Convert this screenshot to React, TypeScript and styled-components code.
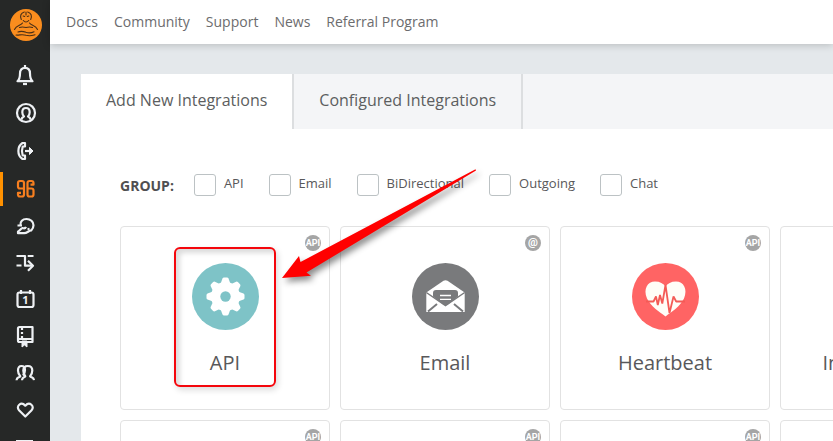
import React from "react";
import styled, { createGlobalStyle } from "styled-components";

const GlobalStyle = createGlobalStyle`
  *, *::before, *::after { box-sizing: border-box; }
  body {
    margin: 0;
    background: #e4e8eb;
    color: #58585a;
    font-family: "Open Sans", "Noto Sans", sans-serif;
  }
`;

const Page = styled.div`
  display: flex;
  height: 100vh;
  overflow: hidden;
`;

const Sidebar = styled.nav`
  display: flex;
  flex-direction: column;
  flex: none;
  gap: 3px;
  width: 50px;
  background: #262827;
`;

const Brand = styled.a`
  display: block;
  height: 32px;
  margin: 9px 0 14px 10px;
`;

const SideGroup = styled.div<{ $gap: number }>`
  display: flex;
  flex-direction: column;
  gap: ${(p) => p.$gap}px;
`;

const SideLink = styled.a<{ $active?: boolean }>`
  display: flex;
  align-items: center;
  height: 34px;
  padding-left: 10px;
  border-left: 3px solid ${(p) => (p.$active ? "#ff9100" : "transparent")};
  color: ${(p) => (p.$active ? "#f77f1f" : "#eef1f4")};
`;

const Glyph = styled.svg`
  display: block;
  flex: none;
  fill: none;
  stroke: currentColor;
  stroke-width: 2.2;
  stroke-linejoin: round;
`;

const Main = styled.div`
  display: flex;
  flex-direction: column;
  flex: 1;
  min-width: 0;
`;

const TopBar = styled.header`
  display: flex;
  align-items: center;
  flex: none;
  gap: 16px;
  height: 44px;
  padding: 0 16px;
  background: #fff;
  box-shadow: 0 1px 8px rgba(0, 0, 0, 0.2);
`;

const TopLink = styled.a`
  color: #6c6c6e;
  font-size: 14px;
  line-height: 20px;
  text-decoration: none;
  white-space: nowrap;
`;

const Panel = styled.main`
  flex: 1;
  margin: 30px 0 0 31px;
  background: #fff;
  overflow: hidden;
`;

const Tabs = styled.div`
  display: flex;
  height: 55px;
  background: #f4f5f7;
`;

const Tab = styled.button<{ $active?: boolean }>`
  padding: 0 25px 3px;
  border: 0;
  border-right: 2px solid #dcdee0;
  background: ${(p) => (p.$active ? "#fff" : "#f4f5f7")};
  color: #5c5e60;
  font: 16px/22px "Open Sans", "Noto Sans", sans-serif;
  white-space: nowrap;
`;

const Filters = styled.fieldset`
  display: flex;
  align-items: center;
  gap: 25px;
  margin: 44px 0 30px 39px;
  padding: 0;
  border: 0;
`;

const FilterTitle = styled.span`
  margin-right: -5px;
  padding-top: 3px;
  color: #4f4f51;
  font-size: 14px;
  font-weight: 700;
  line-height: 20px;
`;

const Filter = styled.label`
  display: flex;
  align-items: flex-start;
  gap: 8px;
  font-size: 13px;
  line-height: 20px;
  white-space: nowrap;
`;

const Check = styled.input`
  appearance: none;
  width: 22px;
  height: 22px;
  margin: 1px 0 0;
  border: 1px solid #bcc2c4;
  border-radius: 3px;
  background: #fff;
`;

const Cards = styled.div`
  display: grid;
  grid-template-columns: repeat(4, 210px);
  grid-auto-rows: 184px;
  gap: 10px;
  margin-left: 39px;
`;

const Card = styled.article`
  position: relative;
  display: flex;
  flex-direction: column;
  align-items: center;
  gap: 18px;
  padding-top: 36px;
  border: 1px solid #e2e2e2;
  border-radius: 4px;
`;

const CardTitle = styled.h2`
  margin: 0;
  color: #58585a;
  font-size: 20px;
  font-weight: 400;
  line-height: 30px;
  white-space: nowrap;
`;

const Art = styled.svg`
  display: block;
  flex: none;
`;

const Badge = styled.span<{ $at?: boolean }>`
  position: absolute;
  top: 8px;
  right: 8px;
  width: 16px;
  height: 16px;
  border-radius: 50%;
  background: #a5a5a5;
  color: #fff;
  font-family: "Roboto", sans-serif;
  font-size: ${(p) => (p.$at ? 11 : 9)}px;
  font-weight: 700;
  line-height: ${(p) => (p.$at ? 15 : 17)}px;
  text-align: center;
`;

const Highlight = styled.div`
  position: absolute;
  top: 20px;
  left: 53px;
  width: 102px;
  height: 140px;
  border: 2px solid #f4060c;
  border-radius: 6px;
  box-shadow: 2px 3px 6px rgba(0, 0, 0, 0.14), inset 4px 4px 5px rgba(0, 0, 0, 0.14);
`;

const Pointer = styled.svg`
  position: absolute;
  z-index: 1;
  top: -64px;
  left: 154px;
  filter: drop-shadow(3px 4px 3px rgba(0, 0, 0, 0.45));
`;

const Icon = ({ children }: { children: React.ReactNode }) => (
  <Glyph width="24" height="24" viewBox="0 0 24 24" aria-hidden="true">
    {children}
  </Glyph>
);

type SideItem = { name: string; active?: boolean; art: React.ReactNode };

const primary: SideItem[] = [
  {
    name: "Alerts",
    art: (
      <>
        <path d="M12 2v3M4.500 18.200C6.400 16.500 7 14.500 7 10.500 7 7 9 4.800 12 4.800s5 2.200 5 5.700c0 4 .6 6 2.500 7.700z" />
        <path d="M10 21h4" />
      </>
    ),
  },
  {
    name: "Profile",
    art: (
      <>
        <circle cx="13" cy="12" r="9" />
        <path d="M8.500 18.500c.3-2 1.500-2.500 2.500-3-1.200-1.200-1.700-2.700-1.700-4.200C9.300 8.800 10.700 7 13 7s3.700 1.800 3.700 4.300c0 1.500-.5 3-1.700 4.200 1 .5 2.200 1 2.500 3" />
      </>
    ),
  },
  {
    name: "Call routing",
    art: (
      <>
        <path d="M9.500 4H12v3.500H9.700c-1 3-1 6 0 9H12V20H9.500C4 16.500 4 7.500 9.500 4z" />
        <path d="M12 12h6" />
        <path d="M16.500 8.500 20 12l-3.500 3.500z" fill="currentColor" strokeWidth="1" />
      </>
    ),
  },
  {
    name: "Integrations",
    active: true,
    art: (
      <>
        <path d="M11 11.500H7a2 2 0 0 1-2-2V6a2 2 0 0 1 2-2h2a2 2 0 0 1 2 2v11.500a2 2 0 0 1-2 2H7a2 2 0 0 1-2-2v-1.700h3" />
        <path d="M14.500 11.500h4a2 2 0 0 1 2 2v4a2 2 0 0 1-2 2h-2a2 2 0 0 1-2-2V6a2 2 0 0 1 2-2h2a2 2 0 0 1 2 2v1.700h-3" />
      </>
    ),
  },
];

const secondary: SideItem[] = [
  {
    name: "Assistant",
    art: (
      <>
        <path d="M7.500 11C7 7.500 9.500 5 13.500 5c4 0 7 2.700 7 6.200 0 2-.8 3.600-2.300 5.200-2.700.3-4 2.800-7 2.800H5v-1.700c2-.7 2.500-3 4.500-3.500 1.500.6 3 0 3.500-1.200M4.500 11.500H9" />
        <path d="M14.500 15h2" />
      </>
    ),
  },
  {
    name: "Escalations",
    art: (
      <>
        <path d="M3.500 5H12v9.700h7M14.700 5h5.800M3.500 14.500h5" />
        <path d="m15 9.700 5 5-5 5" />
      </>
    ),
  },
  {
    name: "Schedule",
    art: (
      <>
        <rect x="4.500" y="4.500" width="16" height="14.500" rx="2" />
        <path d="M8 2v4M17 2v4" />
        <text x="12.500" y="16" textAnchor="middle" fill="currentColor" stroke="none" fontFamily="Open Sans" fontSize="11" fontWeight="700">
          1
        </text>
      </>
    ),
  },
  {
    name: "Reports",
    art: (
      <>
        <path d="M9 17H6.500a1.500 1.500 0 0 1-1.500-1.500V3.500A1.500 1.500 0 0 1 6.500 2h13v15H14M5 14h14.500" />
        <path d="M9 3v10" strokeDasharray="2 2" />
        <path d="M9 16h5v6l-2.500-2L9 22z" fill="currentColor" strokeWidth="1" />
      </>
    ),
  },
  {
    name: "Teams",
    art: (
      <>
        <path d="M3.500 18.200c.2-3 2.500-2.500 3.800-4C5.700 12.500 5 11 5 8.500 5 5.500 6.300 4 8.500 4S12 5.500 12 8c0 2.500-.8 4-2 5.500" />
        <path d="M9 18.200c.2-3 2-2.500 3.300-4-1.500-1.700-2-3.200-2-5.700 0-3 1.700-4.500 4.500-4.500s4.500 1.500 4.500 4.500c0 2.500-.7 4-2.200 5.700 1.300 1.500 3.600 1 3.900 4" />
      </>
    ),
  },
  {
    name: "Favorites",
    art: <path d="M12.300 17.500 6 11.200C2.500 7.500 8 1.800 12.300 6.700 16.600 1.800 22.200 7.500 18.600 11.200z" />,
  },
  { name: "More", art: <path d="M3 5.500h17M4 10.500h15" strokeWidth="3" /> },
];

const SideItems = ({ items, gap }: { items: SideItem[]; gap: number }) => (
  <SideGroup $gap={gap}>
    {items.map((item) => (
      <SideLink key={item.name} href="#" aria-label={item.name} $active={item.active}>
        <Icon>{item.art}</Icon>
      </SideLink>
    ))}
  </SideGroup>
);

const Guru = () => (
  <svg width="32" height="32" viewBox="0 0 32 32" aria-hidden="true">
    <circle cx="16" cy="16" r="16" fill="#fa8d1e" />
    <g fill="none" stroke="#4a2f17" strokeWidth="1.100" strokeLinecap="round">
      <path d="M14.300 3c-3.500 1-4.600 4-3 7.500M17.700 3c3.500 1 4.600 4 3 7.500" />
      <path d="M16 3v3M14.700 7.500l-1.500-.5M17.300 7.500l1.500-.5M13.300 11.500c1.500 2 3.900 2 5.400 0" />
      <path d="M12.500 14c-1.500 2.700-6 2.200-8 6.500M19.500 14c1.500 2.700 6 2.200 8 6.500" />
      <path d="M9.500 18.500c2.500-1 4.500-.5 6.500 0 2-.5 4-1 6.500 0" />
      <path d="M8 23c3-1.200 5-.8 8 .3 3 .9 5.500.7 8-.6" />
      <path d="M6 26c3.500.5 5.500-1.200 10 .3 4.500 1.200 6.500.2 9-.6" />
    </g>
  </svg>
);

const gearTeeth = [0, 45, 90, 135, 180, 225, 270, 315];

const GearArt = () => (
  <Art width="67" height="67" viewBox="0 0 67 67" aria-hidden="true">
    <circle cx="33.500" cy="33.500" r="33.500" fill="#7ec3c7" />
    <g fill="#fff">
      <circle cx="33.500" cy="33.500" r="14.500" />
      {gearTeeth.map((angle) => (
        <path
          key={angle}
          d="M28.500 21 30.500 15.500Q31 14.500 32 14.500h3Q36 14.500 36.500 15.500L38.500 21z"
          transform={`rotate(${angle} 33.500 33.500)`}
        />
      ))}
    </g>
    <circle cx="33.500" cy="33.500" r="5.200" fill="#7ec3c7" />
  </Art>
);

const MailArt = () => (
  <Art width="67" height="67" viewBox="0 0 67 67" aria-hidden="true">
    <circle cx="33.500" cy="33.500" r="33.500" fill="#797a7c" />
    <path d="M14.300 29.500 31.500 17.800q2-1.200 4 0L52.700 29.500V49H14.300z" fill="#fff" />
    <path d="M14.300 29.500 33.500 42.500 52.700 29.500" fill="none" stroke="#797a7c" strokeWidth="1.500" />
    <path d="M21 33.500v-3.500q0-3 3-3h19q3 0 3 3v3.500L36.500 41q-3 2.500-6 0z" fill="#797a7c" />
    <path d="M28 32.500h11M28 36.300h11" stroke="#fff" strokeWidth="1.300" />
    <path d="m16 48.500 9-7.500M51 48.500 42 41" stroke="#797a7c" strokeWidth="2" />
  </Art>
);

const HeartArt = () => (
  <Art width="67" height="67" viewBox="0 0 67 67" aria-hidden="true">
    <circle cx="33.500" cy="33.500" r="33.500" fill="#ff6464" />
    <path
      d="M33.500 53.500C27 48.500 19 43.500 15 35.500 11 26 15.500 18.500 23 18.500c5 0 8.500 2 10.500 5 2-3 5.500-5 10.500-5 7.500 0 12 7.500 8 17-4 8-12 13-18.500 18z"
      fill="#fffdf7"
    />
    <path
      d="M14 38.500h7.500l2.500-5 1.800 8.500 2.200-10 2.300 8.500L33.500 22l4 28 4-16.500 2.700 5H53"
      fill="none"
      stroke="#f45b56"
      strokeWidth="1.800"
      strokeLinejoin="bevel"
    />
  </Art>
);

const PhoneArt = () => (
  <Art width="67" height="67" viewBox="0 0 67 67" aria-hidden="true">
    <circle cx="33.500" cy="33.500" r="33.500" fill="#7ec3c7" />
    <path d="M23 18l7 7-4 5 11 11 5-4 7 7-6 6C31 52 15 36 17 24z" fill="#fff" />
  </Art>
);

const App = () => (
  <Page>
    <GlobalStyle />
    <Sidebar aria-label="Sections">
      <Brand href="#" aria-label="Home">
        <Guru />
      </Brand>
      <SideItems items={primary} gap={4} />
      <SideItems items={secondary} gap={3} />
    </Sidebar>
    <Main>
      <TopBar>
        {["Docs", "Community", "Support", "News", "Referral Program"].map((name) => (
          <TopLink key={name} href="#">
            {name}
          </TopLink>
        ))}
      </TopBar>
      <Panel>
        <Tabs role="tablist">
          <Tab role="tab" aria-selected="true" $active>
            Add New Integrations
          </Tab>
          <Tab role="tab" aria-selected="false">
            Configured Integrations
          </Tab>
        </Tabs>
        <Filters aria-labelledby="group-title">
          <FilterTitle id="group-title">GROUP:</FilterTitle>
          {["API", "Email", "BiDirectional", "Outgoing", "Chat"].map((name) => (
            <Filter key={name}>
              <Check type="checkbox" name="group" value={name} />
              {name}
            </Filter>
          ))}
        </Filters>
        <Cards>
          <Card>
            <Badge>API</Badge>
            <GearArt />
            <CardTitle>API</CardTitle>
            <Highlight />
            <Pointer width="212" height="124" viewBox="0 0 212 124" aria-hidden="true">
              <path d="M7 115 24 93 25.500 99 200.500 6.300 201 7.500 31.500 109.500 36 112.700z" fill="#f00" />
            </Pointer>
          </Card>
          <Card>
            <Badge $at>@</Badge>
            <MailArt />
            <CardTitle>Email</CardTitle>
          </Card>
          <Card>
            <Badge>API</Badge>
            <HeartArt />
            <CardTitle>Heartbeat</CardTitle>
          </Card>
          <Card>
            <PhoneArt />
            <CardTitle>Incoming Call</CardTitle>
          </Card>
          <Card>
            <Badge>API</Badge>
          </Card>
          <Card>
            <Badge>API</Badge>
          </Card>
          <Card>
            <Badge>API</Badge>
          </Card>
          <Card />
        </Cards>
      </Panel>
    </Main>
  </Page>
);

export default App;
